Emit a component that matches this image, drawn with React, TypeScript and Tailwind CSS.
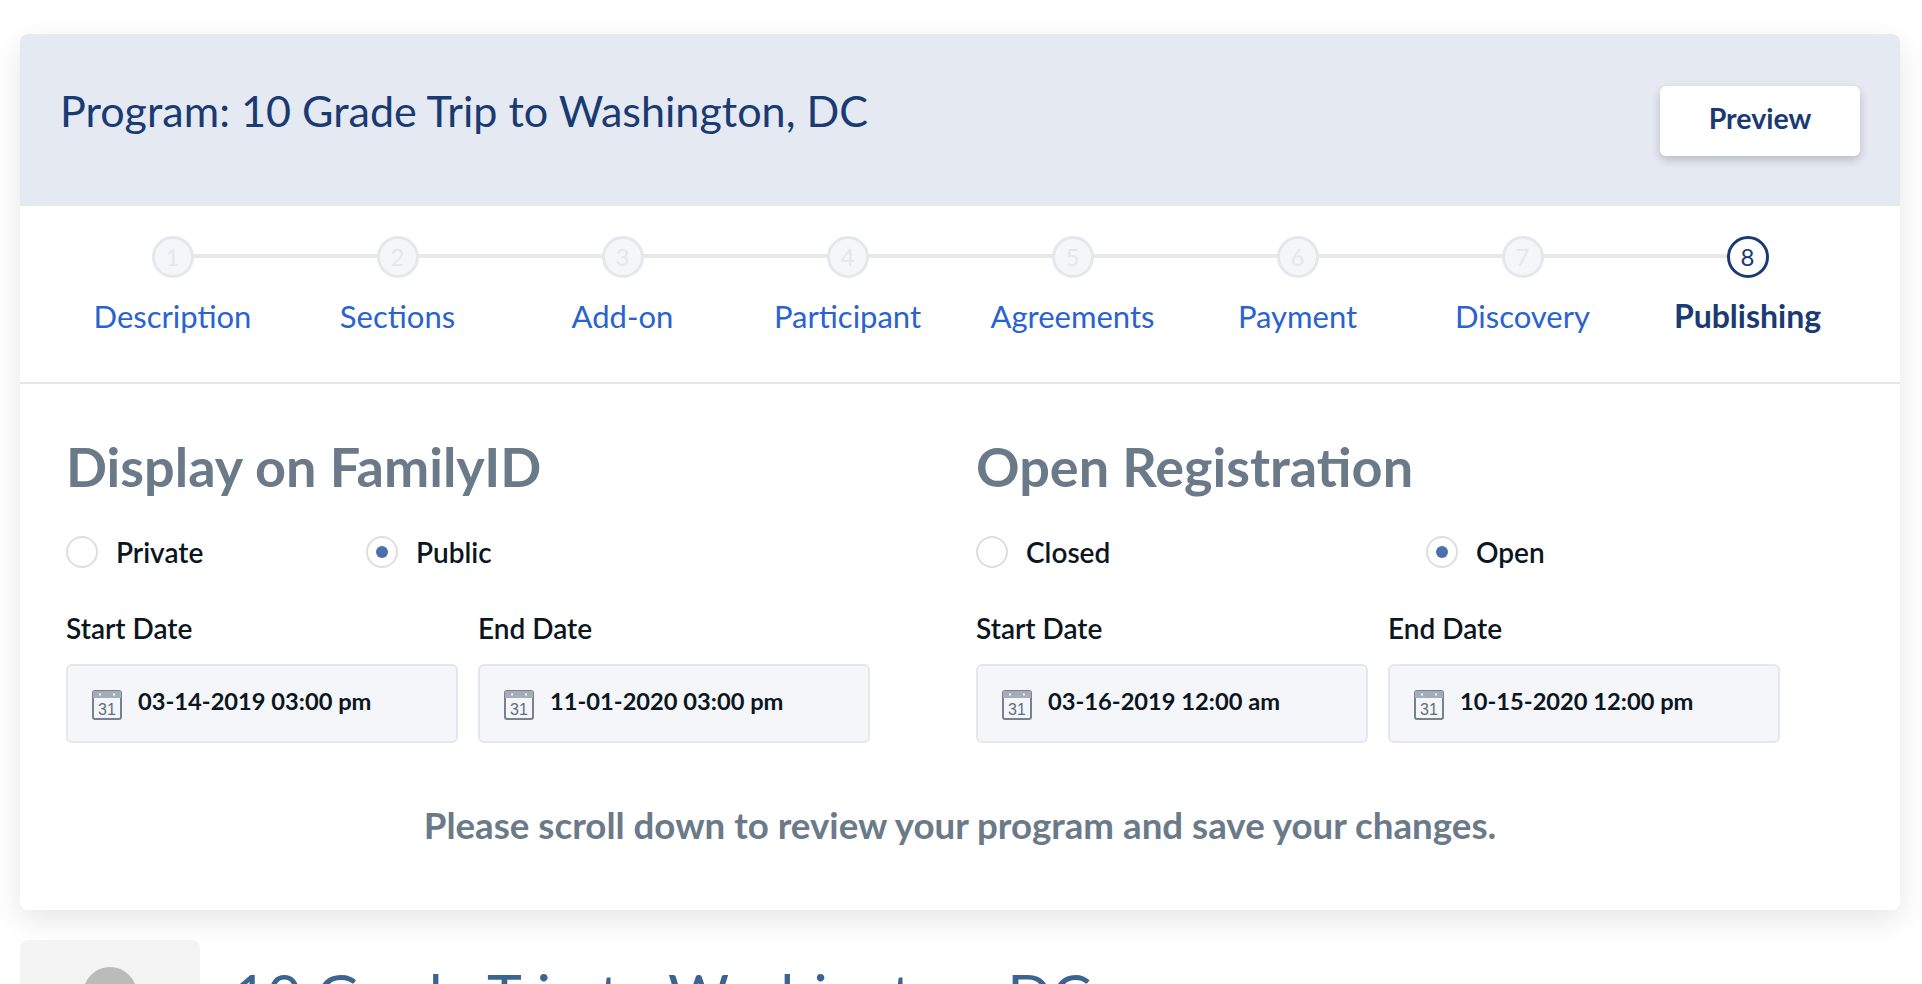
const steps = ["Description", "Sections", "Add-on", "Participant", "Agreements", "Payment", "Discovery", "Publishing"];

function CalendarIcon() {
  return (
    <svg width="30" height="30" viewBox="0 0 30 30" className="shrink-0 mt-[2px]">
      <rect x="1" y="1" width="28" height="28" rx="2" fill="#f4f6fa" stroke="#76838f" strokeWidth="2" />
      <rect x="1" y="1" width="28" height="7" fill="#a3adb8" />
      <rect x="7" y="3.5" width="2" height="2" fill="#f4f6fa" />
      <rect x="21" y="3.5" width="2" height="2" fill="#f4f6fa" />
      <text x="15" y="25" textAnchor="middle" fontSize="16" fill="#5f6e7c" fontFamily="Liberation Sans, sans-serif">31</text>
    </svg>
  );
}

function Radio({ label, on, width }: { label: string; on?: boolean; width: string }) {
  return (
    <div className={`flex items-center gap-[18px] ${width}`}>
      <span className="w-8 h-8 rounded-full border-2 border-[#dedede] bg-white flex items-center justify-center">
        {on && <span className="w-3 h-3 rounded-full bg-[#4a6fad]" />}
      </span>
      <span className="text-[28px] leading-8 font-semibold text-[#0b1620]">{label}</span>
    </div>
  );
}

function DateField({ label, value }: { label: string; value: string }) {
  return (
    <div className="w-[392px]">
      <div className="text-[28px] leading-8 font-semibold text-[#0b1620]">{label}</div>
      <div className="mt-5 h-[79px] flex items-center gap-4 pl-6 border-2 border-[#e2e8ee] rounded-md bg-[#f4f6fa]">
        <CalendarIcon />
        <span className="mb-[4px] text-[23.7px] font-bold text-[#0b1620]">{value}</span>
      </div>
    </div>
  );
}

function Section({ title, radios, offset, start, end }: { title: string; radios: [string, string]; offset: string; start: string; end: string }) {
  return (
    <div className="w-[910px]">
      <h2 className="text-[54px] leading-[60px] font-bold text-[#6b7a88]">{title}</h2>
      <div className="flex mt-[39px]">
        <Radio label={radios[0]} width={offset} />
        <Radio label={radios[1]} on width="w-auto" />
      </div>
      <div className="flex gap-5 mt-11">
        <DateField label="Start Date" value={start} />
        <DateField label="End Date" value={end} />
      </div>
    </div>
  );
}

export default function App() {
  return (
    <div className="h-[984px] overflow-hidden bg-white pt-[34px] pl-5 pr-[22px] font-['Lato','Liberation_Sans',sans-serif]">
      <div className="h-[876px] rounded-lg bg-white shadow-[0_10px_30px_rgba(0,0,0,0.10)] overflow-hidden">
        <div className="h-[172px] bg-[#e5e9f2] px-10 flex justify-between items-start">
          <h1 className="mt-[50px] text-[43.1px] leading-[52px] text-[#1a3a73]">Program: 10 Grade Trip to Washington, DC</h1>
          <button className="mt-[52px] w-[200px] h-[70px] pb-[5px] rounded-md bg-white text-[28.5px] font-bold text-[#1a3a73] shadow-[0_4px_10px_rgba(0,0,0,0.2)]">Preview</button>
        </div>
        <div className="h-[178px] border-b-2 border-[#e2e6ea] px-10 pt-[30px]">
          <div className="grid grid-cols-8">
            {steps.map((s, i) => {
              const active = i === 7;
              return (
                <div key={s} className="relative flex flex-col items-center">
                  {i < 7 && <span className="absolute left-1/2 w-full top-[18px] h-1 bg-[#e8e8e8]" />}
                  <span className={`relative w-[42px] h-[42px] rounded-full border-[3px] flex items-center justify-center text-[24px] ${active ? "border-[#1a3a73] text-[#1a3a73] bg-white" : "border-[#e2e8ee] text-[#e2e8ee] bg-[#f4f6fa]"}`}>{i + 1}</span>
                  <span className={`mt-[20px] leading-9 ${active ? "text-[32px] font-bold text-[#1a3a73]" : "text-[31px] text-[#2a62d0]"}`}>{s}</span>
                </div>
              );
            })}
          </div>
        </div>
        <div className="flex pl-[46px] pt-[53px]">
          <Section title="Display on FamilyID" radios={["Private", "Public"]} offset="w-[300px]" start="03-14-2019 03:00 pm" end="11-01-2020 03:00 pm" />
          <Section title="Open Registration" radios={["Closed", "Open"]} offset="w-[450px]" start="03-16-2019 12:00 am" end="10-15-2020 12:00 pm" />
        </div>
        <p className="mt-[62px] text-center text-[36.7px] leading-10 font-bold text-[#6b7a88]">Please scroll down to review your program and save your changes.</p>
      </div>
      <div className="mt-[30px] flex">
        <div className="w-[180px] h-[200px] rounded-t-lg bg-[#f4f4f4] flex justify-center pt-[27px]">
          <span className="w-[54px] h-[80px] rounded-full bg-[#bbbbbb]" />
        </div>
        <h2 className="ml-[33px] mt-[21px] text-[59px] leading-[68px] whitespace-nowrap text-[#3b6591]">10 Grade Trip to Washington, DC</h2>
      </div>
    </div>
  );
}
